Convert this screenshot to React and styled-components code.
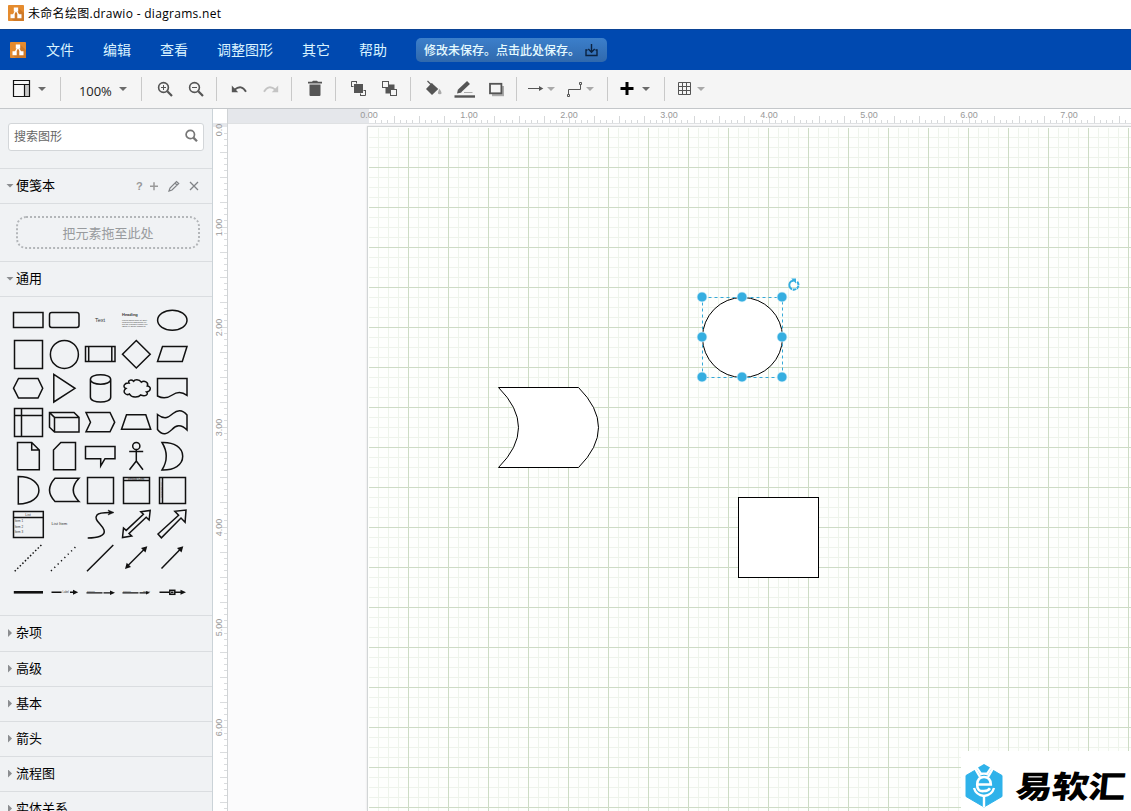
import React from "react";
import styled, { createGlobalStyle, css } from "styled-components";

const GlobalStyle = createGlobalStyle`
  * { box-sizing: border-box; }
  body {
    margin: 0;
    overflow: hidden;
    font-family: "Noto Sans", "Noto Sans CJK SC", sans-serif;
    color: #000;
  }
  svg { display: block; flex: none; }
`;

const Window = styled.div`
  position: relative;
  display: flex;
  flex-direction: column;
  width: 1131px;
  height: 811px;
  overflow: hidden;
  background: #fff;
`;

const TitleBar = styled.div`
  display: flex;
  align-items: center;
  gap: 4px;
  height: 29px;
  flex: none;
  padding: 0 8px 3px;
  font-family: "Open Sans", "Noto Sans CJK SC", sans-serif;
  font-size: 12px;
  letter-spacing: 0.3px;
  white-space: nowrap;
`;

const MenuBar = styled.div`
  display: flex;
  align-items: center;
  height: 41px;
  flex: none;
  padding-left: 10px;
  background: #0049b0;
  border-top: 1px solid #0b4395;
`;

const Menu = styled.nav`
  display: flex;
  gap: 29px;
  margin-left: 20px;
  padding-bottom: 2px;
`;

const MenuItem = styled.span`
  font: 14px/20px "Noto Sans CJK SC", sans-serif;
  color: #d9f3ff;
  white-space: nowrap;
`;

const SaveButton = styled.div`
  display: flex;
  align-items: center;
  justify-content: space-between;
  width: 191px;
  height: 24px;
  margin-left: 29px;
  padding: 0 9px 0 8px;
  border-radius: 5px;
  background: linear-gradient(#3c7fcb, #3069ad);
  color: #e6fbff;
  font: 500 12px/24px "Noto Sans CJK SC", sans-serif;
  white-space: nowrap;
`;

const ToolBar = styled.div`
  display: flex;
  align-items: center;
  height: 39px;
  flex: none;
  background: #f5f5f5;
  border-bottom: 1px solid #c4c7ca;
`;

const ToolGroup = styled.div`
  display: flex;
  align-items: center;
  width: ${(p) => p.$w}px;
  height: 24px;
  padding-left: ${(p) => p.$pad}px;
  border-right: ${(p) => (p.$last ? "none" : "1px solid #c9c9c9")};
`;

const ToolIcon = styled.svg.attrs({ width: 24, height: 24, viewBox: "-12 -12 24 24" })`
  margin-left: ${(p) => p.$gap || 0}px;
  fill: none;
  stroke: #555;
`;

const Caret = styled.i`
  flex: none;
  width: 8px;
  height: 4px;
  margin-left: ${(p) => p.$gap || 0}px;
  clip-path: polygon(0 0, 100% 0, 50% 100%);
  background: ${(p) => (p.$light ? "#a9a9a9" : "#6b6b6b")};
`;

const Zoom = styled.span`
  width: 35px;
  padding-top: 3px;
  font: 13px/20px "Open Sans", sans-serif;
  letter-spacing: -0.1px;
  color: #222;
`;

const Body = styled.div`
  display: flex;
  flex: 1;
  min-height: 0;
`;

const Sidebar = styled.aside`
  display: flex;
  flex-direction: column;
  width: 213px;
  flex: none;
  overflow: hidden;
  background: #f0f2f4;
  border-right: 1px solid #cbd3d8;
`;

const SearchArea = styled.div`
  height: 60px;
  flex: none;
  padding: 14px 8px 0;
  border-bottom: 1px solid #dadde0;
`;

const SearchBox = styled.div`
  display: flex;
  align-items: center;
  justify-content: space-between;
  height: 28px;
  padding: 0 5px 2px;
  background: #fff;
  border: 1px solid #d3d6d9;
  border-radius: 3px;
  font: 12px/18px "Noto Sans CJK SC", sans-serif;
  color: #666;
`;

const SectionTitle = styled.div`
  display: flex;
  align-items: center;
  height: ${(p) => p.$h || 35}px;
  flex: none;
  padding: 0 13px 1px 6px;
  border-bottom: 1px solid #dadde0;
  font: 13px/20px "Noto Sans CJK SC", sans-serif;
`;

const Fold = styled.i`
  width: ${(p) => (p.$open ? 8 : 4)}px;
  height: ${(p) => (p.$open ? 4 : 8)}px;
  margin: 0 ${(p) => (p.$open ? "2px 0 0" : "4px 0 2px")};
  background: #8b8d90;
  ${(p) =>
    p.$open
      ? css`clip-path: polygon(0 0, 100% 0, 50% 100%);`
      : css`clip-path: polygon(0 0, 100% 50%, 0 100%);`}
`;

const SectionName = styled.span`
  margin: -1px 0 1px;
`;

const Actions = styled.div`
  margin-left: auto;
`;

const Scratchpad = styled.div`
  height: 58px;
  flex: none;
  padding: 12px 12px 0 16px;
  border-bottom: 1px solid #dadde0;
`;

const DropZone = styled.div`
  height: 33px;
  border: 2px dotted #b3b6b9;
  border-radius: 10px;
  font: 13px/29px "Noto Sans CJK SC", sans-serif;
  text-align: center;
  color: #989b9e;
`;

const Palette = styled.div`
  display: grid;
  grid-template-columns: repeat(5, 36px);
  grid-auto-rows: 34px;
  height: 319px;
  flex: none;
  padding: 6px 0 0 10px;
  border-bottom: 1px solid #dadde0;
`;

const ShapeCell = styled.svg.attrs({ width: 36, height: 34, viewBox: "-18 -17 36 34" })`
  fill: none;
  stroke: #111;
  stroke-width: 1.5;
  text {
    font-family: "Liberation Sans", sans-serif;
    fill: #333;
    stroke: none;
  }
`;

const SideRuler = styled.div`
  width: 15px;
  flex: none;
  background: #fff;
`;

const Workspace = styled.div`
  display: flex;
  flex-direction: column;
  flex: 1;
  min-width: 0;
`;

const Canvas = styled.div`
  flex: 1;
  min-height: 0;
  padding: 2px 0 0 139px;
  background: #fbfbfc;
`;

const Page = styled.div`
  height: 100%;
  border-top: 1px solid #d2d5d6;
  border-left: 1px solid #d2d5d6;
  box-shadow: 0 0 2px #ddd;
  background: #fefffd;
`;

const Watermark = styled.div`
  position: absolute;
  right: 0;
  bottom: 0;
  display: flex;
  align-items: center;
  width: 170px;
  height: 60px;
  padding: 9px 0 0 4px;
  background: #fff;
`;

const Brand = styled.span`
  margin: -2px 0 0 13px;
  font: 900 37px/40px "Noto Sans CJK SC", sans-serif;
  letter-spacing: -0.5px;
  white-space: nowrap;
  transform: skewX(-6deg) scaleY(0.84);
`;

const menus = ["文件", "编辑", "查看", "调整图形", "其它", "帮助"];

const closedSections = [
  ["杂项", 36],
  ["高级", 35],
  ["基本", 35],
  ["箭头", 35],
  ["流程图", 35],
  ["实体关系", 35],
];

const Logo = ({ size }) => (
  <svg width={size} height={size} viewBox="0 0 16 16">
    <rect width="16" height="16" rx="0.8" fill="#e58b2e" />
    <path d="M10 2.5L16 8V15.2a.8.8 0 0 1-.8.8H6l-3.5-3z" fill="#cf7a28" />
    <path d="M8 5L4.8 11M8 5L11.2 11" stroke="#fff" strokeWidth="1.4" />
    <path d="M5.8 2.5h4.4v4H5.8zM2.5 9.3h4.2v4H2.5zM9.3 9.3h4.2v4H9.3z" fill="#fff" />
  </svg>
);

const HRuler = () => {
  const ticks = [];
  for (let i = 1; i < 123; i++) {
    const x = Math.floor(141 + i * 6.25) + 0.5;
    ticks.push(<path key={i} d={`M${x} 14v-${i % 4 === 0 ? 7 : 3}`} />);
  }
  return (
    <svg width="903" height="15" stroke="#d6d8da">
      <rect width="903" height="15" fill="#fff" stroke="none" />
      <rect width="141" height="15" fill="#e5e7eb" stroke="none" />
      {ticks}
      <path d="M0 14.5h903" stroke="#dfe1e3" />
      <g fill="#999" stroke="none" fontFamily="Liberation Sans, sans-serif" fontSize="9" textAnchor="middle">
        {[0, 1, 2, 3, 4, 5, 6, 7].map((n) => (
          <text key={n} x={141 + n * 100} y="9">{n}.00</text>
        ))}
      </g>
    </svg>
  );
};

const VRuler = () => {
  const ticks = [];
  for (let i = 1; i < 110; i++) {
    const y = Math.floor(18 + i * 6.25) + 0.5;
    ticks.push(<path key={i} d={`M14 ${y}h-${i % 4 === 0 ? 7 : 3}`} />);
  }
  return (
    <svg width="15" height="702" stroke="#dadcde">
      {ticks}
      <rect y="14" width="15" height="4" fill="#e5e7eb" stroke="none" />
      <path d="M14.5 0v702" stroke="#d0d3d5" />
      <svg y="15" width="15" height="687">
        <g fill="#999" stroke="none" fontFamily="Liberation Sans, sans-serif" fontSize="9" textAnchor="middle">
          {[0, 1, 2, 3, 4, 5, 6].map((n) => (
            <text key={n} transform={`translate(9 ${3.5 + n * 100}) rotate(-90)`}>{n}.00</text>
          ))}
        </g>
      </svg>
    </svg>
  );
};

const handles = [
  [334, 170], [374, 170], [414, 170],
  [334, 210], [414, 210],
  [334, 250], [374, 250], [414, 250],
];

const Diagram = () => (
  <svg width="763" height="684">
    <defs>
      <pattern id="grid" width="40" height="40" patternUnits="userSpaceOnUse">
        <path d="M10.5 0v40M20.5 0v40M30.5 0v40M0 10.5h40M0 20.5h40M0 30.5h40" stroke="#eef4eb" />
        <path d="M.5 0v40M0 .5h40" stroke="#cddcc5" />
      </pattern>
    </defs>
    <rect x="1" y="1" width="762" height="683" fill="url(#grid)" />
    <g fill="#fff" stroke="#000">
      <path d="M130.5 260.5H210.5Q250.5 300.5 210.5 340.5H130.5Q170.5 300.5 130.5 260.5z" />
      <rect x="370.5" y="370.5" width="80" height="80" />
      <circle cx="374.5" cy="210.5" r="40" />
    </g>
    <rect x="334.5" y="170.5" width="80" height="80" fill="none" stroke="#35a9d8" strokeDasharray="3 3" />
    {handles.map(([x, y]) => (
      <circle key={`${x}-${y}`} cx={x} cy={y} r="5" fill="#35aee0" stroke="#e3f5fc" strokeWidth=".7" />
    ))}
    <g transform="translate(426 158)" fill="none" stroke="#35aee0">
      <path d="M3.2 -3.2A4.6 4.6 0 1 1 -2.8 -3.7L1 -5" strokeWidth="2" strokeDasharray="3.4 .7 3.4 .7 3.4 .7 30" />
      <path d="M-2.8 -6.6H2V-1.6z" fill="#35aee0" stroke="none" />
    </g>
  </svg>
);

const lorem = ["Lorem ipsum dolor sit amet", "consectetur adipisicing elit", "sed do eiusmod tempor inci", "labore et dolore magna al"];

// one entry per palette cell, drawn around the cell centre
const shapes = [
  <rect x="-14.5" y="-7.5" width="29.5" height="15" />,
  <rect x="-14.5" y="-7.5" width="29.5" height="15" rx="2.2" />,
  <text x="0" y="2" fontSize="5.5" textAnchor="middle">Text</text>,
  <>
    <text x="-14" y="-4" fontSize="4" fontWeight="700">Heading</text>
    {lorem.map((t, i) => (
      <text key={t} x="-14" y={0.7 + i * 2.1} fontSize="2.1">{t}</text>
    ))}
  </>,
  <ellipse cx=".3" cy=".3" rx="14.7" ry="10" />,

  <rect x="-13.5" y="-13.5" width="28" height="28" />,
  <circle cx=".4" cy=".4" r="14" />,
  <path d="M-14.5 -7.5h29.5v15h-29.5zM-11.3 -7.5v15M11.8 -7.5v15" />,
  <path d="M.3 -13.5L14.2 .3L.3 14L-13.5 .3z" />,
  <path d="M-9.5 -7.5H15L10.3 7.5H-14.5z" />,

  <path d="M-9.5 -9.5H10L14.7 .2L10 10H-9.5L-14.5 .2z" />,
  <path d="M-10.2 -13.7L11 .3L-10.2 14z" />,
  <path d="M-9.6 -8.5V9.3C-9.6 15.6 10.7 15.6 10.7 9.3V-8.5C10.7 -15 -9.6 -15 -9.6 -8.5C-9.6 -2.3 10.7 -2.3 10.7 -8.5" />,
  <path d="M-7 -5C-11.7 -5.5 -13.9 -1 -10 .5C-14.5 3.5 -10 8 -6.5 6C-4.5 10 2.5 9.8 4.6 7C9.5 9 13 6.3 10.5 4C15.5 3.2 15.3 -1.8 11.3 -2C13 -6 8 -7.8 5.3 -5.8C3 -9.2 -1.5 -8.5 -2.4 -6.7C-5 -9 -8.5 -7.5 -7 -5z" />,
  <path d="M-14.5 -9.5H15V7.3Q7.5 2 .3 7Q-7 12 -14.5 8z" />,

  <path d="M-13.5 -13.5h28v28h-28zM-13.5 -6.5h28M-6.5 -13.5v28" />,
  <path d="M-14.5 -9.5H10L15 -4.6V10H-9.5L-14.5 5.2zM-14.5 -9.5L-9.5 -4.6H15M-9.5 -4.6V10" />,
  <path d="M-14 -9.5H10L14.7 .2L10 9.8H-14L-9.5 .2z" />,
  <path d="M-9.5 -7.3H9.8L14.7 7.3H-14.5z" />,
  <path d="M-14.5 -7.5C-7 -1.5 -3 -5 1 -8.5C5 -12 10 -13 15 -7V8C9 2 4 3 0 7.5C-5 12 -9 14.5 -14.5 7.5z" />,

  <path d="M-10.5 -13.5H3.7L11.3 -6V13.8H-10.5zM3.7 -13.5V-6H11.3" />,
  <path d="M-3.2 -13.5H11.5V13.8H-10.5V-6z" />,
  <path d="M-14.5 -9.5H15V2.7H5L.7 10V2.7H-14.5z" />,
  <><circle cx=".3" cy="-10" r="3.6" /><path d="M.3 -6.3V5M-6.8 -4.5H7.2M.3 5L-6.5 13.8M.3 5L7 13.8" /></>,
  <path d="M-10 -13.5C2 -14 10.7 -8.5 10.7 .3S2 14.3 -10 14Q-1.5 .3 -10 -13.5z" />,

  <path d="M-9.7 -13.5C17.8 -13.5 17.8 14 -9.7 14z" />,
  <path d="M-9 -11.7H15Q3.5 .3 15 11.5H-9Q-20 .3 -9 -11.7z" />,
  <rect x="-12.5" y="-12.5" width="26" height="26" />,
  <><path d="M-12.5 -12.5h26v26h-26zM-12.5 -9.5h26" /><text x="0" y="-10.1" fontSize="2.7" fontWeight="700" textAnchor="middle">Vertical Cont</text></>,
  <><path d="M-12.5 -12.5h26v26h-26zM-9.5 -12.5v26" /><text transform="translate(-10.2 0) rotate(-90)" fontSize="2.5" textAnchor="middle">Horizontal Co</text></>,

  <>
    <path d="M-14.5 -12.5h29.8v26h-29.8zM-14.5 -6.5h29.8" />
    <text x="0" y="-8.4" fontSize="3.4" textAnchor="middle">List</text>
    {[1, 2, 3].map((n) => <text key={n} x="-13.3" y={-8 + n * 5.8} fontSize="3">Item {n}</text>)}
  </>,
  <text x="-12.6" y="1" fontSize="4.2">List Item</text>,
  <><path d="M-12.3 14C-3 14 6 12 4 6S-7 -4 -3 -9Q-1 -11.5 10 -11.5" /><path d="M8 -14L14 -11.5L8 -9L9.5 -11.5z" fill="#111" stroke="#111" strokeWidth=".5" /></>,
  <path d="M-13.5 13.5L-12.5 4L-9.8 6.4L7.4 -9.7L4.8 -12.2L14.2 -13.5L13.1 -4L10.2 -6.8L-7 9.5L-4.3 12z" />,
  <path d="M-14 10L6.6 -8.7L2.8 -12.7L14 -14L13.1 -1.7L9 -6L-10.6 13.8z" />,

  <path d="M-13.3 13.3L13.6 -13.3" strokeDasharray="1.5 2.1" />,
  <path d="M-13 13L12 -11.5" strokeDasharray="1.2 3.5" />,
  <path d="M-13 13.3L13.3 -13" />,
  <><path d="M-9 8.5L9 -9.5" /><path d="M-11 11L-9.3 4.7L-5 9.1zM11.3 -11.7L5 -10L9.5 -5.5z" fill="#111" stroke="none" /></>,
  <><path d="M-10.5 10.5L9 -9.5" /><path d="M11.3 -11.7L5 -10L9.5 -5.5z" fill="#111" stroke="none" /></>,

  <path d="M-14.2 .3H15" strokeWidth="2.6" />,
  <><path d="M-12.5 .3H-2.5M6 .3H11" /><text x="-1.5" y="1.3" fontSize="2.6">Label</text><path d="M9 -2.2L14.2 .3L9 2.8z" fill="#111" stroke="none" /></>,
  <><path d="M-13.5 .8H2.5M3.5 .8H11" strokeWidth="1.2" /><path d="M10 -1.5L15 .8L10 3.1z" fill="#111" stroke="none" /><text x="-13" y="0" fontSize="2.5">Source</text></>,
  <><path d="M-13.5 .8H2.5M3.5 .8H11" strokeWidth="1.2" /><path d="M10 -1L14 .8L10 2.6z" fill="#111" stroke="none" /><text x="-13" y="0" fontSize="2.5">Source</text><text x="7" y="0" fontSize="2.5">Target</text></>,
  <><path d="M-12.5 .3H-3M3 .3H10" /><path d="M8.5 -2.2L14 .3L8.5 2.8z" fill="#111" stroke="none" /><rect x="-2.2" y="-1.7" width="5" height="4" /><path d="M-1 .3h2.5" /></>,
];

const ToolBarContent = () => (
  <ToolBar>
    <ToolGroup $w={61} $pad={10}>
      <ToolIcon>
        <rect x="3" y="-4" width="4" height="12" fill="#c8c8c8" stroke="none" />
        <path d="M-8.5 -8.5h16v16h-16zM-8.5 -4.5h16M2.5 -4.5v12" stroke="#111" strokeWidth="1.2" />
      </ToolIcon>
      <Caret $gap={4} />
    </ToolGroup>
    <ToolGroup $w={81} $pad={18}>
      <Zoom>100%</Zoom>
      <Caret $gap={5} />
    </ToolGroup>
    <ToolGroup $w={75} $pad={11}>
      <ToolIcon>
        <circle cx="-1.5" cy="-1.5" r="4.9" strokeWidth="1.6" />
        <path d="M2.3 2.3L7 7" strokeWidth="2.2" />
        <path d="M-4 -1.5h5M-1.5 -4v5" />
      </ToolIcon>
      <ToolIcon $gap={7}>
        <circle cx="-1.5" cy="-1.5" r="4.9" strokeWidth="1.6" />
        <path d="M2.3 2.3L7 7" strokeWidth="2.2" />
        <path d="M-4 -1.5h5" />
      </ToolIcon>
    </ToolGroup>
    <ToolGroup $w={75} $pad={10}>
      <ToolIcon>
        <path d="M-4.5 .8Q2.5 -5 7 2.7" strokeWidth="1.9" />
        <path d="M-7.2 -3.5V3.2H-.8z" fill="#555" stroke="none" />
      </ToolIcon>
      <ToolIcon $gap={8}>
        <path d="M4.5 .8Q-2.5 -5 -7 2.7" stroke="#c4c4c4" strokeWidth="1.9" />
        <path d="M7.2 -3.5V3.2H.8z" fill="#c4c4c4" stroke="none" />
      </ToolIcon>
    </ToolGroup>
    <ToolGroup $w={44} $pad={11}>
      <ToolIcon>
        <path d="M-5.5 -4.5H5.5V6Q5.5 7 4.5 7H-4.5Q-5.5 7 -5.5 6zM-7 -7.3H-3L-2 -8.3H2L3 -7.3H7V-5.5H-7z" fill="#555" stroke="none" />
      </ToolIcon>
    </ToolGroup>
    <ToolGroup $w={75} $pad={11}>
      <ToolIcon>
        <rect x="-5" y="-5" width="9" height="9" fill="#555" stroke="none" />
        <path d="M-7.5 -2V-7.5H-2M6.5 1V6.5H1M-7.5 -2.5H-5.5M-2.5 -7.5V-5.5M6.5 1.5H4.5M1.5 6.5V4.5" />
      </ToolIcon>
      <ToolIcon $gap={7}>
        <rect x="-4.5" y="-4.5" width="9" height="9" fill="#555" stroke="none" />
        <rect x="-7.5" y="-7.5" width="6" height="6" fill="#f5f5f5" />
        <rect x=".5" y=".5" width="6" height="6" fill="#f5f5f5" />
      </ToolIcon>
    </ToolGroup>
    <ToolGroup $w={106} $pad={11}>
      <ToolIcon>
        <path d="M-8 0L-2.3 -6L4.3 0L-2 6z" fill="#555" stroke="none" />
        <path d="M-6.5 -8L-1.5 -3M-5.5 -1L-1.5 -5" strokeWidth="1.2" />
        <path d="M5.5 -.3Q9.5 5.3 5.8 5.3T5.5 -.3z" fill="#aaa" stroke="none" />
      </ToolIcon>
      <ToolIcon $gap={7}>
        <path d="M-10.5 7.5H10" stroke="#555" strokeWidth="2.4" />
        <path d="M-5.5 2L3.5 -6.5" strokeWidth="4.2" />
        <path d="M-8 4.5L-7 .3L-3.5 3.6z" fill="#555" stroke="none" />
        <path d="M-1 3.5H7.5" stroke="#aaa" />
      </ToolIcon>
      <ToolIcon $gap={7}>
        <path d="M-4 -3H8V7.2H-4z" fill="#aaa" stroke="none" />
        <rect x="-6" y="-5.2" width="11.4" height="9.5" fill="#f5f5f5" strokeWidth="1.8" />
      </ToolIcon>
    </ToolGroup>
    <ToolGroup $w={91} $pad={7}>
      <ToolIcon>
        <path d="M-8 -.5H5" />
        <path d="M3 -3L7.3 -.5L3 2z" fill="#555" stroke="none" />
      </ToolIcon>
      <Caret $light $gap={-1} />
      <ToolIcon $gap={8}>
        <path d="M-6.5 5V.5H5.5V-4M-7.5 5.5h2v2h-2zM4.5 -6.5h2v2h-2z" />
      </ToolIcon>
      <Caret $light $gap={-1} />
    </ToolGroup>
    <ToolGroup $w={57} $pad={7}>
      <ToolIcon>
        <path d="M-6.5 -.5H6.5M0 -7V6" stroke="#000" strokeWidth="3" />
      </ToolIcon>
      <Caret $gap={3} />
    </ToolGroup>
    <ToolGroup $last $w={60} $pad={8}>
      <ToolIcon>
        <path d="M-6.5 -6.5h12v12h-12zM-2.5 -6.5v12M1.5 -6.5v12M-6.5 -2.5h12M-6.5 1.5h12" />
      </ToolIcon>
      <Caret $light />
    </ToolGroup>
  </ToolBar>
);

const App = () => {
  return (
    <Window>
      <GlobalStyle />
      <TitleBar>
        <Logo size={16} />
        <span>未命名绘图.drawio - diagrams.net</span>
      </TitleBar>
      <MenuBar>
        <Logo size={16} />
        <Menu>
          {menus.map((m) => (
            <MenuItem key={m}>{m}</MenuItem>
          ))}
        </Menu>
        <SaveButton>
          <span>修改未保存。点击此处保存。</span>
          <svg width="13" height="13" fill="none" stroke="#0a2240" strokeWidth="1.4">
            <path d="M6.5 0v7M3.3 5L6.5 8.2L9.7 5M2.5 6H1V11.5H12V6H10.5" />
          </svg>
        </SaveButton>
      </MenuBar>
      <ToolBarContent />
      <Body>
        <Sidebar>
          <SearchArea>
            <SearchBox>
              搜索图形
              <svg width="13" height="14" fill="none" stroke="#777">
                <circle cx="5.3" cy="5.5" r="4.2" strokeWidth="1.7" />
                <path d="M8.4 8.6L12 12.3" strokeWidth="2.3" />
              </svg>
            </SearchBox>
          </SearchArea>
          <SectionTitle>
            <Fold $open />
            <SectionName>便笺本</SectionName>
            <Actions>
              <svg width="64" height="14" fill="none" stroke="#808386">
                <text x="1" y="11" fontSize="11" fontFamily="Liberation Sans, sans-serif" fontWeight="700" fill="#999" stroke="none">?</text>
                <path d="M15 7.2h8M19 3.2v8" strokeWidth="1.5" stroke="#999" />
                <path d="M34 12L35 9L41.5 2.5L43.7 4.5L37 11zM40 4L42 6" strokeWidth="1.2" />
                <path d="M55 3L63 11M63 3L55 11" strokeWidth="1.3" />
              </svg>
            </Actions>
          </SectionTitle>
          <Scratchpad>
            <DropZone>把元素拖至此处</DropZone>
          </Scratchpad>
          <SectionTitle>
            <Fold $open />
            <SectionName>通用</SectionName>
          </SectionTitle>
          <Palette>
            {shapes.map((s, i) => (
              <ShapeCell key={i}>{s}</ShapeCell>
            ))}
          </Palette>
          {closedSections.map(([name, h]) => (
            <SectionTitle key={name} $h={h}>
              <Fold />
              <SectionName>{name}</SectionName>
            </SectionTitle>
          ))}
        </Sidebar>
        <SideRuler>
          <VRuler />
        </SideRuler>
        <Workspace>
          <HRuler />
          <Canvas>
            <Page>
              <Diagram />
            </Page>
          </Canvas>
        </Workspace>
      </Body>
      <Watermark>
        <svg width="38" height="44" viewBox="-19 -22 38 44">
          <path d="M0 -21L18 -10.5V10.5L0 21L-18 10.5V-10.5z" fill="#2fb2ea" stroke="#2fb2ea" strokeLinejoin="round" />
          <path d="M-8 -18L-3.5 -10.5Q0 -12 3.5 -10.5L8 -18L0 -22z" fill="#fff" />
          <path d="M-6 -18.5L0 -22L6 -18.5L2.5 -13.5H-2.5z" fill="#2fb2ea" />
          <g fill="none" stroke="#fff" strokeWidth="2.4">
            <path d="M-9 -17.5L-4 -9M9 -17.5L4 -9M-10 2Q-8 9 0 10Q8 9 10 2M0 10V21" />
            <path d="M-6.5 -1.5H6.8Q6.5 -9 0 -9T-6.8 -1.5T0 5Q4 5 6 2.2" strokeWidth="2.6" />
          </g>
        </svg>
        <Brand>易软汇</Brand>
      </Watermark>
    </Window>
  );
};

export default App;
